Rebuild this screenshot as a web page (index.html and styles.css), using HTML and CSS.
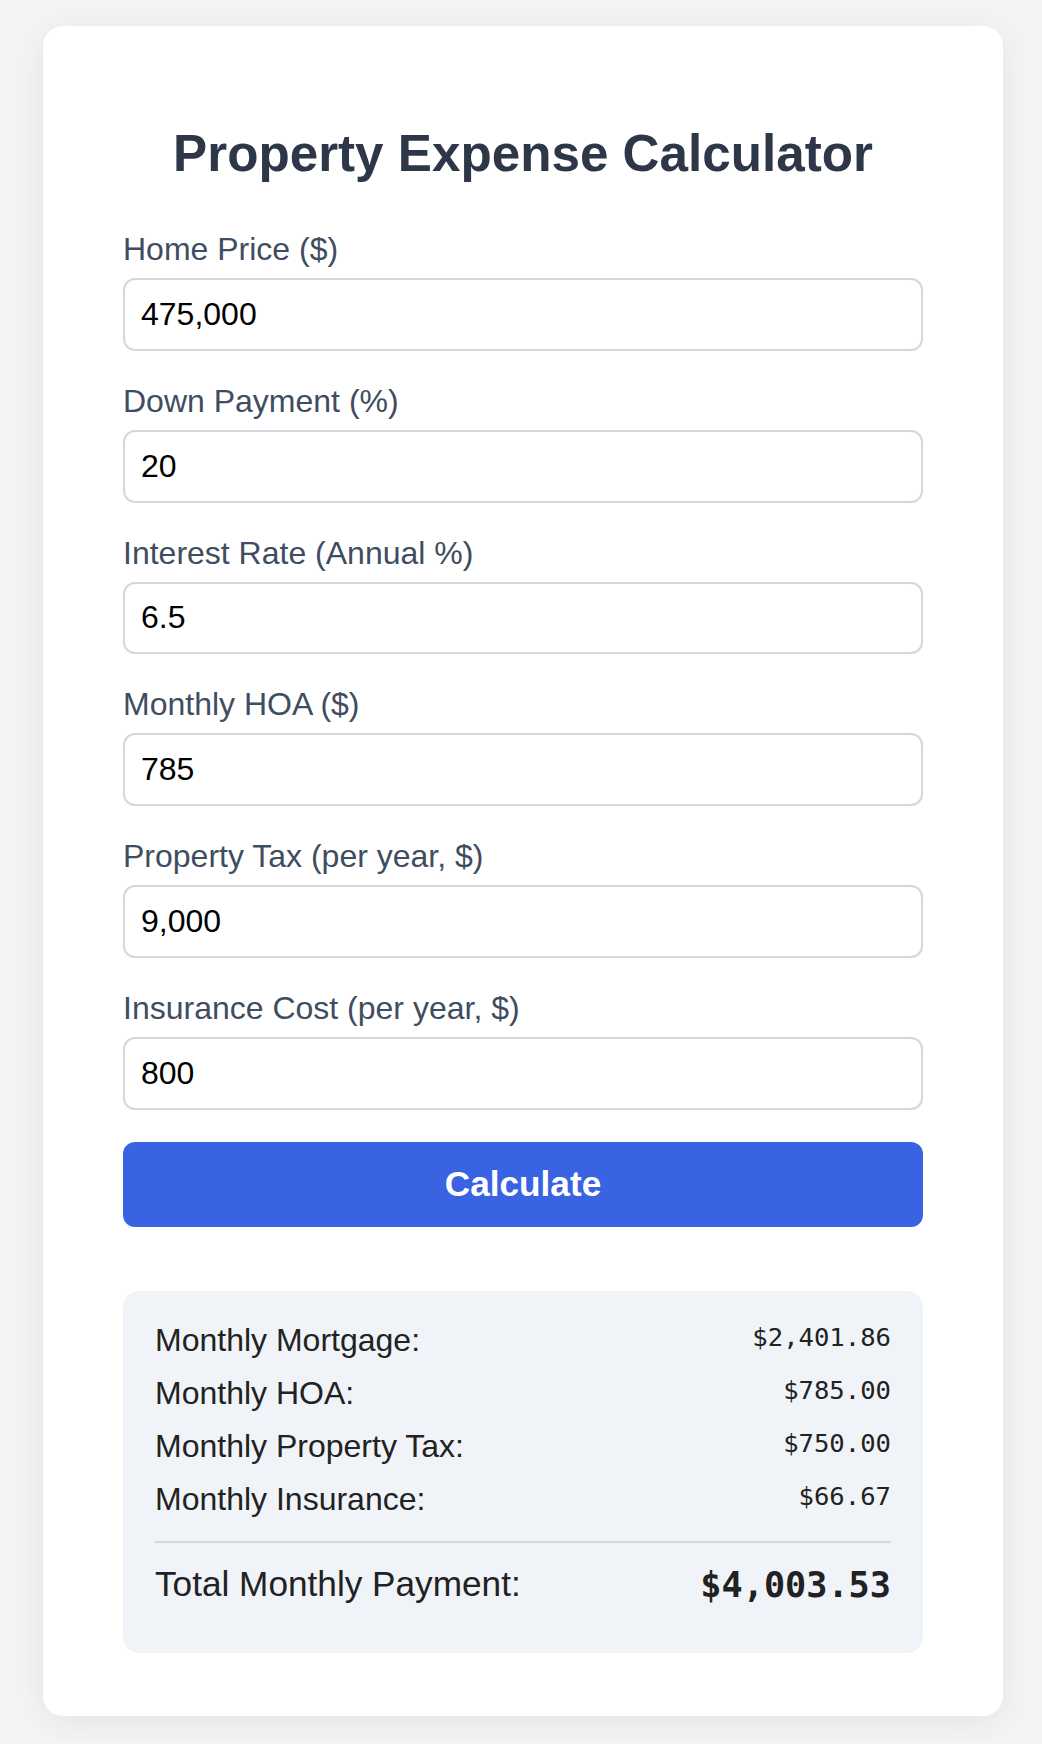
FILE: index.html
```html
<!DOCTYPE html>
<html lang="en">
<head>
<meta charset="utf-8">
<title>Property Expense Calculator</title>
<link rel="stylesheet" href="styles.css">
</head>
<body>
  <main class="card">
    <h1 class="title">Property Expense Calculator</h1>

    <div class="field">
      <label class="field-label" for="price">Home Price ($)</label>
      <input class="field-input" id="price" type="text" value="475,000">
    </div>
    <div class="field">
      <label class="field-label" for="down">Down Payment (%)</label>
      <input class="field-input" id="down" type="text" value="20">
    </div>
    <div class="field">
      <label class="field-label" for="rate">Interest Rate (Annual %)</label>
      <input class="field-input" id="rate" type="text" value="6.5">
    </div>
    <div class="field">
      <label class="field-label" for="hoa">Monthly HOA ($)</label>
      <input class="field-input" id="hoa" type="text" value="785">
    </div>
    <div class="field">
      <label class="field-label" for="tax">Property Tax (per year, $)</label>
      <input class="field-input" id="tax" type="text" value="9,000">
    </div>
    <div class="field">
      <label class="field-label" for="ins">Insurance Cost (per year, $)</label>
      <input class="field-input" id="ins" type="text" value="800">
    </div>

    <button class="calc-btn" type="button">Calculate</button>

    <section class="results">
      <div class="result-row"><span>Monthly Mortgage:</span><span class="amount">$2,401.86</span></div>
      <div class="result-row"><span>Monthly HOA:</span><span class="amount">$785.00</span></div>
      <div class="result-row"><span>Monthly Property Tax:</span><span class="amount">$750.00</span></div>
      <div class="result-row"><span>Monthly Insurance:</span><span class="amount">$66.67</span></div>
      <div class="result-row total"><span>Total Monthly Payment:</span><span class="amount">$4,003.53</span></div>
    </section>
  </main>
</body>
</html>
```

FILE: styles.css
```css
* {
  box-sizing: border-box;
}

html, body {
  margin: 0;
}

body {
  background: #f3f4f6;
  font-family: "Liberation Sans", Arial, Helvetica, sans-serif;
  padding: 26px 39px 26px 43px;
}

.card {
  background: #ffffff;
  border-radius: 20px;
  box-shadow: 0 6px 36px rgba(0, 0, 0, 0.07);
  padding: 64px 80px 63px;
}

.title {
  margin: 34px 0 48px;
  font-size: 51.2px;
  font-weight: 700;
  line-height: normal;
  color: #2d3748;
  text-align: center;
}

.field {
  margin-bottom: 32px;
}

.field-label {
  display: block;
  margin-bottom: 10px;
  font-size: 32px;
  line-height: normal;
  color: #404d61;
}

.field-input {
  display: block;
  width: 100%;
  height: 72.8px;
  padding: 0 16px;
  border: 2px solid #d4d7dc;
  border-radius: 12px;
  font-family: "Liberation Sans", Arial, Helvetica, sans-serif;
  font-size: 32px;
  color: #000000;
  background: #ffffff;
  outline: none;
}

.calc-btn {
  display: block;
  width: 100%;
  height: 85px;
  border: none;
  border-radius: 12px;
  background: #3a63e3;
  color: #ffffff;
  font-family: "Liberation Sans", Arial, Helvetica, sans-serif;
  font-size: 35.2px;
  font-weight: 700;
  cursor: pointer;
}

.results {
  margin-top: 64px;
  padding: 31px 32px 32px;
  border-radius: 16px;
  background: #f0f4f9;
  color: #222222;
}

.result-row {
  display: flex;
  justify-content: space-between;
  margin-bottom: 16px;
  font-size: 32px;
  line-height: normal;
}

.amount {
  font-family: "DejaVu Sans Mono", Menlo, monospace;
  font-size: 25.6px;
}

.result-row.total {
  margin-top: 23px;
  padding-top: 21px;
  border-top: 2px solid #d4d7dc;
  font-size: 35.2px;
}

.result-row.total .amount {
  font-size: 35.2px;
  font-weight: 700;
}
```
